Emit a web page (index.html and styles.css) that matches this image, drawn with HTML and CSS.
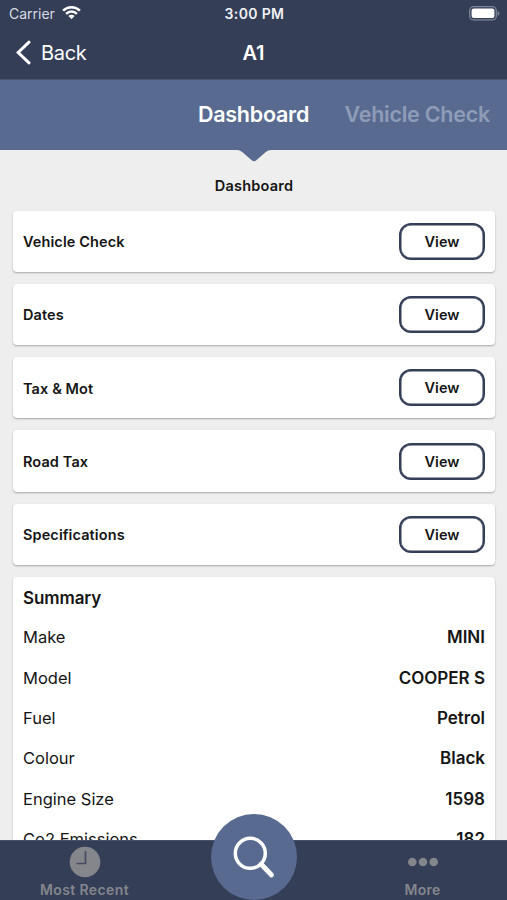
FILE: index.html
```html
<!DOCTYPE html>
<html lang="en">
<head>
<meta charset="utf-8">
<meta name="viewport" content="width=device-width">
<title>A1</title>
<link rel="stylesheet" href="styles.css">
</head>
<body>
<div class="app">
  <header class="header">
    <div class="status">
      <div class="carrier"><span>Carrier</span>
        <svg class="wifi" width="19" height="15" viewBox="0 0 19 15" fill="none" stroke="#fff" stroke-width="2.5"><path d="M1.1 5.6a12 12 0 0 1 16.8 0M4.1 8.8a7.700 7.700 0 0 1 10.8 0"/><path d="M6.400 11.100a4.400 4.400 0 0 1 6.200 0L9.500 14.200Z" fill="#fff" stroke="none"/></svg>
      </div>
      <span class="time">3:00 PM</span>
      <svg class="battery" width="31" height="15" viewBox="0 0 31 15"><rect x=".7" y=".7" width="26.6" height="13.2" rx="4" fill="none" stroke="#7e8596" stroke-width="1.3"/><rect x="2.6" y="2.6" width="22.8" height="9.4" rx="2" fill="#fff"/><path d="M28.6 5v4.8q1.8-.7 1.8-2.4T28.6 5" fill="#7e8596"/></svg>
    </div>
    <div class="nav">
      <div class="back"><svg width="16" height="25" viewBox="0 0 16 25" fill="none" stroke="#fff" stroke-width="3" stroke-linecap="round"><path d="M14 2.200 3.200 12.500 14 22.800"/></svg><span>Back</span></div>
      <h1 class="title">A1</h1>
      <span></span>
    </div>
  </header>
  <nav class="tabs">
    <span class="tab active">Dashboard</span>
    <span class="tab next">Vehicle Check</span>
    <svg class="pointer" width="34" height="13" viewBox="0 0 34 13"><path d="M0 0H34V1Q31 1 28.500 3.200L19 11.400Q17 13 15 11.400L5.500 3.200Q3 1 0 1Z" fill="#586a90"/></svg>
  </nav>
  <main class="content">
    <h2 class="heading">Dashboard</h2>
    <section class="card"><span class="name">Vehicle Check</span><button class="view">View</button></section>
    <section class="card"><span class="name">Dates</span><button class="view">View</button></section>
    <section class="card"><span class="name">Tax &amp; Mot</span><button class="view">View</button></section>
    <section class="card"><span class="name">Road Tax</span><button class="view">View</button></section>
    <section class="card"><span class="name">Specifications</span><button class="view">View</button></section>
    <section class="summary">
      <h3>Summary</h3>
      <dl>
        <div><dt>Make</dt><dd>MINI</dd></div>
        <div><dt>Model</dt><dd>COOPER S</dd></div>
        <div><dt>Fuel</dt><dd>Petrol</dd></div>
        <div><dt>Colour</dt><dd>Black</dd></div>
        <div><dt>Engine Size</dt><dd>1598</dd></div>
        <div><dt>Co2 Emissions</dt><dd>182</dd></div>
      </dl>
    </section>
  </main>
  <footer class="bar">
    <div class="item recent"><svg width="32" height="32" viewBox="0 0 32 32"><circle cx="16" cy="16" r="15.300" fill="#84868c"/><path d="M16.500 5v12.500H7.500" fill="none" stroke="#454d62" stroke-width="1.700"/></svg><span>Most Recent</span></div>
    <div class="search"><svg width="86" height="86" viewBox="0 0 86 86" fill="none" stroke="#fff"><circle cx="39.300" cy="39.300" r="15" stroke-width="3.500"/><path d="m50 50 10.500 11" stroke-width="4.800" stroke-linecap="round"/></svg></div>
    <div class="item"><svg width="32" height="32" viewBox="0 0 32 32" fill="#84868c"><circle cx="5.300" cy="16" r="4.300"/><circle cx="16" cy="16" r="4.300"/><circle cx="26.700" cy="16" r="4.300"/></svg><span>More</span></div>
  </footer>
</div>
</body>
</html>
```
FILE: styles.css
```css
* { box-sizing: border-box; }
body { margin: 0; font-family: Inter, "Liberation Sans", sans-serif; color: #151515; }
h1, h2, h3, dl, dd { margin: 0; }
svg { display: block; flex: none; }
.app { width: 507px; height: 900px; overflow: hidden; display: flex; flex-direction: column; background: #eee; }
.header { height: 80px; flex: none; background: #343e57; color: #fff; border-bottom: 1px solid #49546f; }
.status { height: 27px; padding: 0 7px 0 9px; display: grid; grid-template-columns: 1fr auto 1fr; align-items: center; font-size: 14px; }
.carrier { display: flex; align-items: center; gap: 7px; color: #d8dbe2; }
.wifi { margin-top: -2px; }
.time { font-weight: 600; letter-spacing: .35px; color: #f0f1f4; }
.battery { justify-self: end; }
.nav { height: 51px; padding: 0 15px; display: grid; grid-template-columns: 1fr auto 1fr; align-items: center; }
.back { display: flex; align-items: center; gap: 10px; font-size: 20px; letter-spacing: -.3px; }
.title { font-size: 20px; font-weight: 600; }
.tabs { position: relative; height: 70px; flex: none; display: grid; grid-template-columns: 1fr auto 1fr; align-items: center; background: #586a90; }
.tab { padding-bottom: 2px; font-size: 21.500px; font-weight: 600; letter-spacing: -.25px; white-space: nowrap; }
.active { grid-column: 2; color: #fff; }
.next { justify-self: end; margin-right: 17px; color: #8f9cb7; }
.pointer { position: absolute; top: 69px; left: 237px; }
.content { flex: 1; min-height: 0; overflow: hidden; padding: 0 12px 0 13px; }
.heading { height: 60.500px; padding-top: 11px; line-height: 49px; font-size: 14.500px; font-weight: 600; letter-spacing: .2px; text-align: center; }
.card { height: 61.300px; margin-bottom: 12px; padding: 0 10px; display: flex; justify-content: space-between; align-items: center; background: #fff; border-radius: 4px; box-shadow: 0 1px 2px rgba(0,0,0,.3); }
.name { padding-top: 1px; font-size: 14.500px; font-weight: 600; letter-spacing: .1px; }
.view { width: 86px; height: 37px; padding: 0; border: 2px solid #343e57; border-radius: 12px; box-shadow: inset 0 0 0 .5px #343e57; background: #fff; color: #151515; font: 600 14.500px Inter, "Liberation Sans", sans-serif; }
.summary { height: 320px; padding: 0 10px; background: #fff; border-radius: 4px; box-shadow: 0 1px 2px rgba(0,0,0,.3); }
.summary h3 { height: 40.300px; padding-top: 1px; line-height: 40.300px; font-size: 17px; font-weight: 600; letter-spacing: -.1px; }
.summary dl div { height: 40.300px; display: flex; justify-content: space-between; align-items: center; font-size: 16.500px; }
.summary dd { font-size: 17px; font-weight: 600; }
.bar { position: relative; height: 60px; flex: none; display: grid; grid-template-columns: 1fr 1fr 1fr; background: #343e57; border-top: 1px solid #485069; }
.item { display: flex; flex-direction: column; align-items: center; padding-top: 5px; font-size: 14px; font-weight: 600; line-height: 24px; color: #84868c; letter-spacing: .25px; }
.recent { letter-spacing: .4px; }
.search { justify-self: center; width: 86px; height: 86px; margin-top: -27px; border-radius: 50%; background: #586a90; }
```
